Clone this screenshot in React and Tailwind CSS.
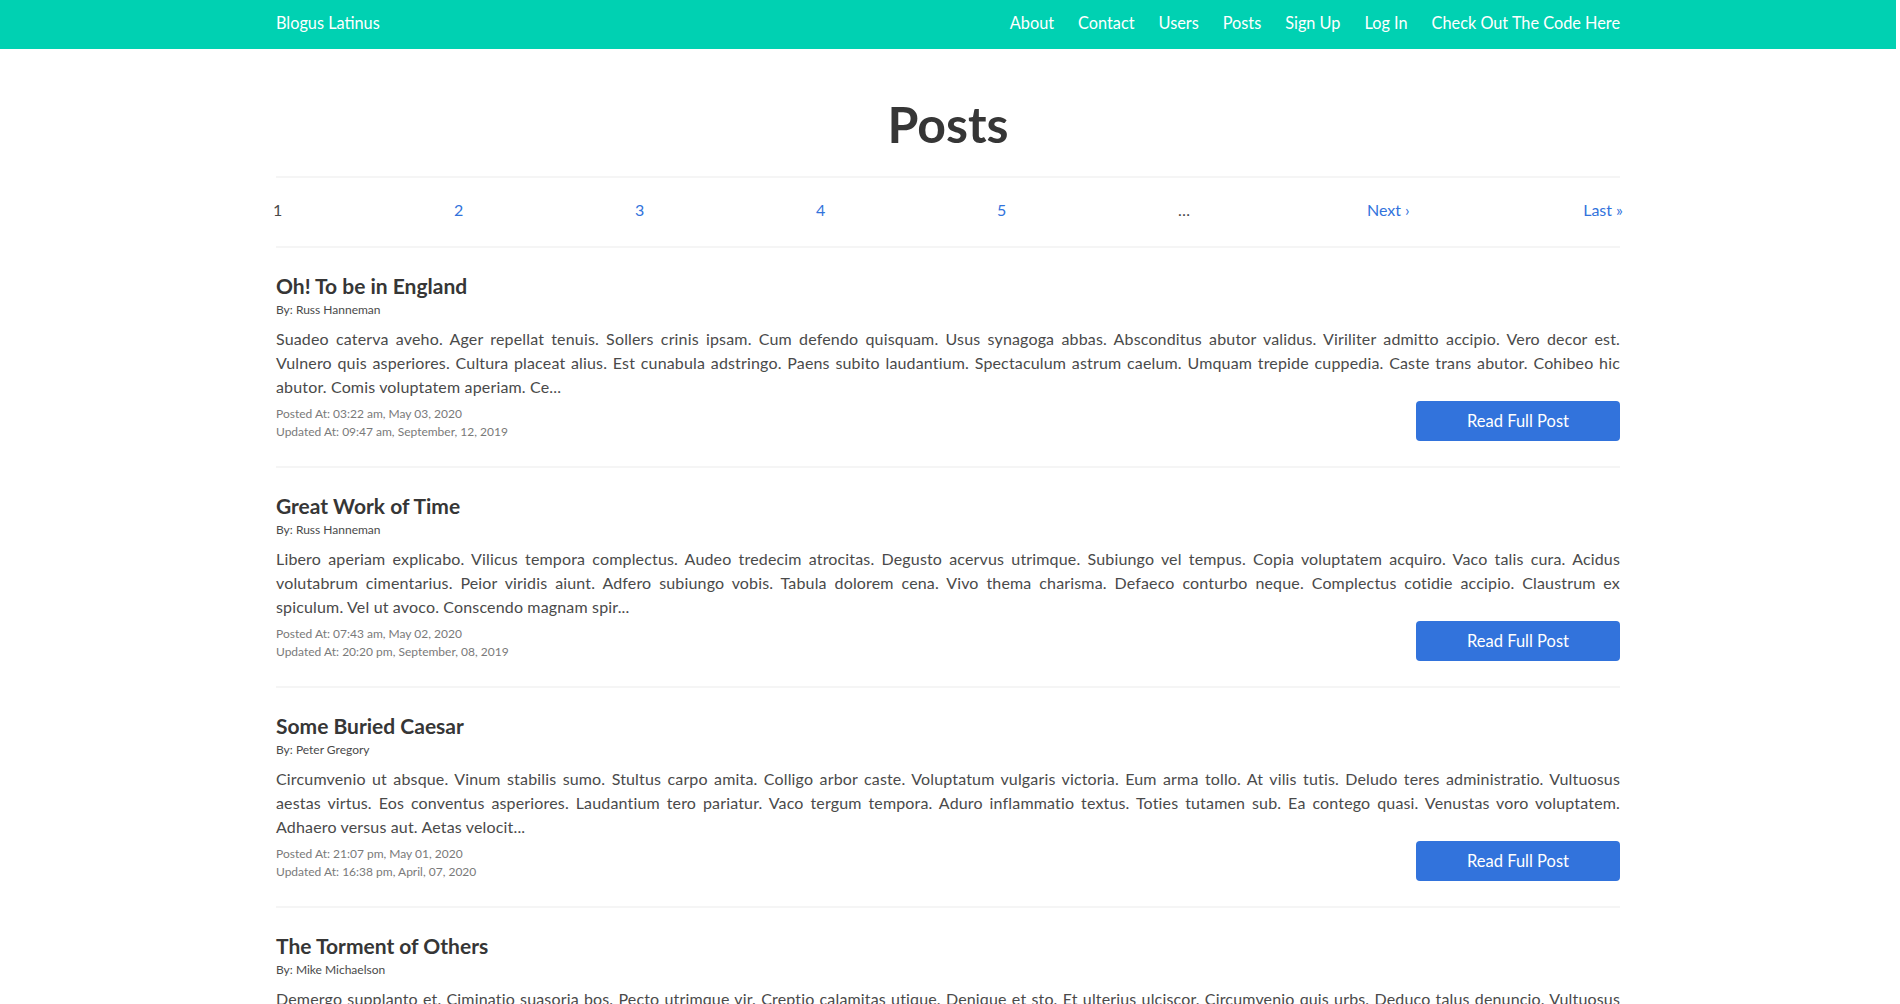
import React from "react";

const NAV_LINKS = ["About", "Contact", "Users", "Posts", "Sign Up", "Log In", "Check Out The Code Here"];

// body text is kept as the lines the original layout breaks it into
const POSTS = [
    {
        id: 1,
        title: "Oh! To be in England",
        author: "Russ Hanneman",
        lines: [
            "Suadeo caterva aveho. Ager repellat tenuis. Sollers crinis ipsam. Cum defendo quisquam. Usus synagoga abbas. Absconditus abutor validus. Viriliter admitto accipio. Vero decor est.",
            "Vulnero quis asperiores. Cultura placeat alius. Est cunabula adstringo. Paens subito laudantium. Spectaculum astrum caelum. Umquam trepide cuppedia. Caste trans abutor. Cohibeo hic",
            "abutor. Comis voluptatem aperiam. Ce..."
        ],
        posted: "03:22 am, May 03, 2020",
        updated: "09:47 am, September, 12, 2019"
    },
    {
        id: 2,
        title: "Great Work of Time",
        author: "Russ Hanneman",
        lines: [
            "Libero aperiam explicabo. Vilicus tempora complectus. Audeo tredecim atrocitas. Degusto acervus utrimque. Subiungo vel tempus. Copia voluptatem acquiro. Vaco talis cura. Acidus",
            "volutabrum cimentarius. Peior viridis aiunt. Adfero subiungo vobis. Tabula dolorem cena. Vivo thema charisma. Defaeco conturbo neque. Complectus cotidie accipio. Claustrum ex",
            "spiculum. Vel ut avoco. Conscendo magnam spir..."
        ],
        posted: "07:43 am, May 02, 2020",
        updated: "20:20 pm, September, 08, 2019"
    },
    {
        id: 3,
        title: "Some Buried Caesar",
        author: "Peter Gregory",
        lines: [
            "Circumvenio ut absque. Vinum stabilis sumo. Stultus carpo amita. Colligo arbor caste. Voluptatum vulgaris victoria. Eum arma tollo. At vilis tutis. Deludo teres administratio. Vultuosus",
            "aestas virtus. Eos conventus asperiores. Laudantium tero pariatur. Vaco tergum tempora. Aduro inflammatio textus. Toties tutamen sub. Ea contego quasi. Venustas voro voluptatem.",
            "Adhaero versus aut. Aetas velocit..."
        ],
        posted: "21:07 pm, May 01, 2020",
        updated: "16:38 pm, April, 07, 2020"
    },
    {
        id: 4,
        title: "The Torment of Others",
        author: "Mike Michaelson",
        lines: [
            "Demergo supplanto et. Ciminatio suasoria bos. Pecto utrimque vir. Creptio calamitas utique. Denique et sto. Et ulterius ulciscor. Circumvenio quis urbs. Deduco talus denuncio. Vultuosus",
            "amitto vester. Tamen vester adeo. Aestivus amita comitatus. Textor cognatus tutamen. Curtus admoneo aestas. Vis cedo cras. Tandem curis confero. Theca sustineo atavus. Cubitum",
            "aro vilis. Vis cedo..."
        ],
        posted: "11:12 am, April 30, 2020",
        updated: "08:05 am, March, 21, 2020"
    }
];

const Navbar = () => (
    <nav className="bg-[#00d1b2] text-white">
        <div className="mx-auto flex h-[49px] w-[1344px] items-center justify-between pb-[2px] text-[16.3px]">
            <a href="#">Blogus Latinus</a>
            <div className="flex items-center gap-6">
                {NAV_LINKS.map((link) => (
                    <a key={link} href="#">{link}</a>
                ))}
            </div>
        </div>
    </nav>
);

const Pagination = () => (
    <div className="-mx-[3px] flex pt-[20px] pb-[24px] text-base leading-6">
        <span className="w-[181px] text-[#4a4a4a]">1</span>
        <a href="#" className="w-[181px] text-[#3273dc]">2</a>
        <a href="#" className="w-[181px] text-[#3273dc]">3</a>
        <a href="#" className="w-[181px] text-[#3273dc]">4</a>
        <a href="#" className="w-[181px] text-[#3273dc]">5</a>
        <span className="w-[189px] text-[#4a4a4a]">&hellip;</span>
        <a href="#" className="flex-1 text-[#3273dc]">Next &rsaquo;</a>
        <a href="#" className="text-right text-[#3273dc]">Last &raquo;</a>
    </div>
);

const PostItem = ({ post }) => (
    <article>
        <div className="pt-[24px] pb-[25px]">
            <h2 className="text-[21px] leading-[28px] font-bold text-[#363636]">{post.title}</h2>
            <p className="text-[12px] leading-[19px] text-[#4a4a4a]">By: {post.author}</p>
            <p className="mt-2 text-base leading-6 tracking-[0.01em] text-[#4a4a4a]">
                {post.lines.map((line, i) => (
                    <span
                        key={i}
                        className={
                            i < post.lines.length - 1
                                ? "block text-justify [text-align-last:justify]"
                                : "block text-left"
                        }
                    >
                        {line}
                    </span>
                ))}
            </p>
            <div className="mt-[2px] flex items-end justify-between">
                <div className="text-[12px] leading-[18px] text-[#7a7a7a]">
                    <p>Posted At: {post.posted}</p>
                    <p>Updated At: {post.updated}</p>
                </div>
                <button className="h-[40px] w-[204px] rounded bg-[#3273dc] text-[16.5px] text-white">
                    Read Full Post
                </button>
            </div>
        </div>
        <hr className="h-[2px] border-0 bg-[#f5f5f5]" />
    </article>
);

export default function App() {
    return (
        <div className="min-h-screen bg-white font-['Lato',sans-serif] pr-[4px]">
            <Navbar />
            <main className="mx-auto w-[1344px]">
                <h1 className="pt-[47px] text-center text-[50px] leading-[56px] font-bold text-[#363636]">Posts</h1>
                <hr className="mt-[24px] h-[2px] border-0 bg-[#f5f5f5]" />
                <Pagination />
                <hr className="h-[2px] border-0 bg-[#f5f5f5]" />
                {POSTS.map((post) => (
                    <PostItem key={post.id} post={post} />
                ))}
            </main>
        </div>
    );
}
